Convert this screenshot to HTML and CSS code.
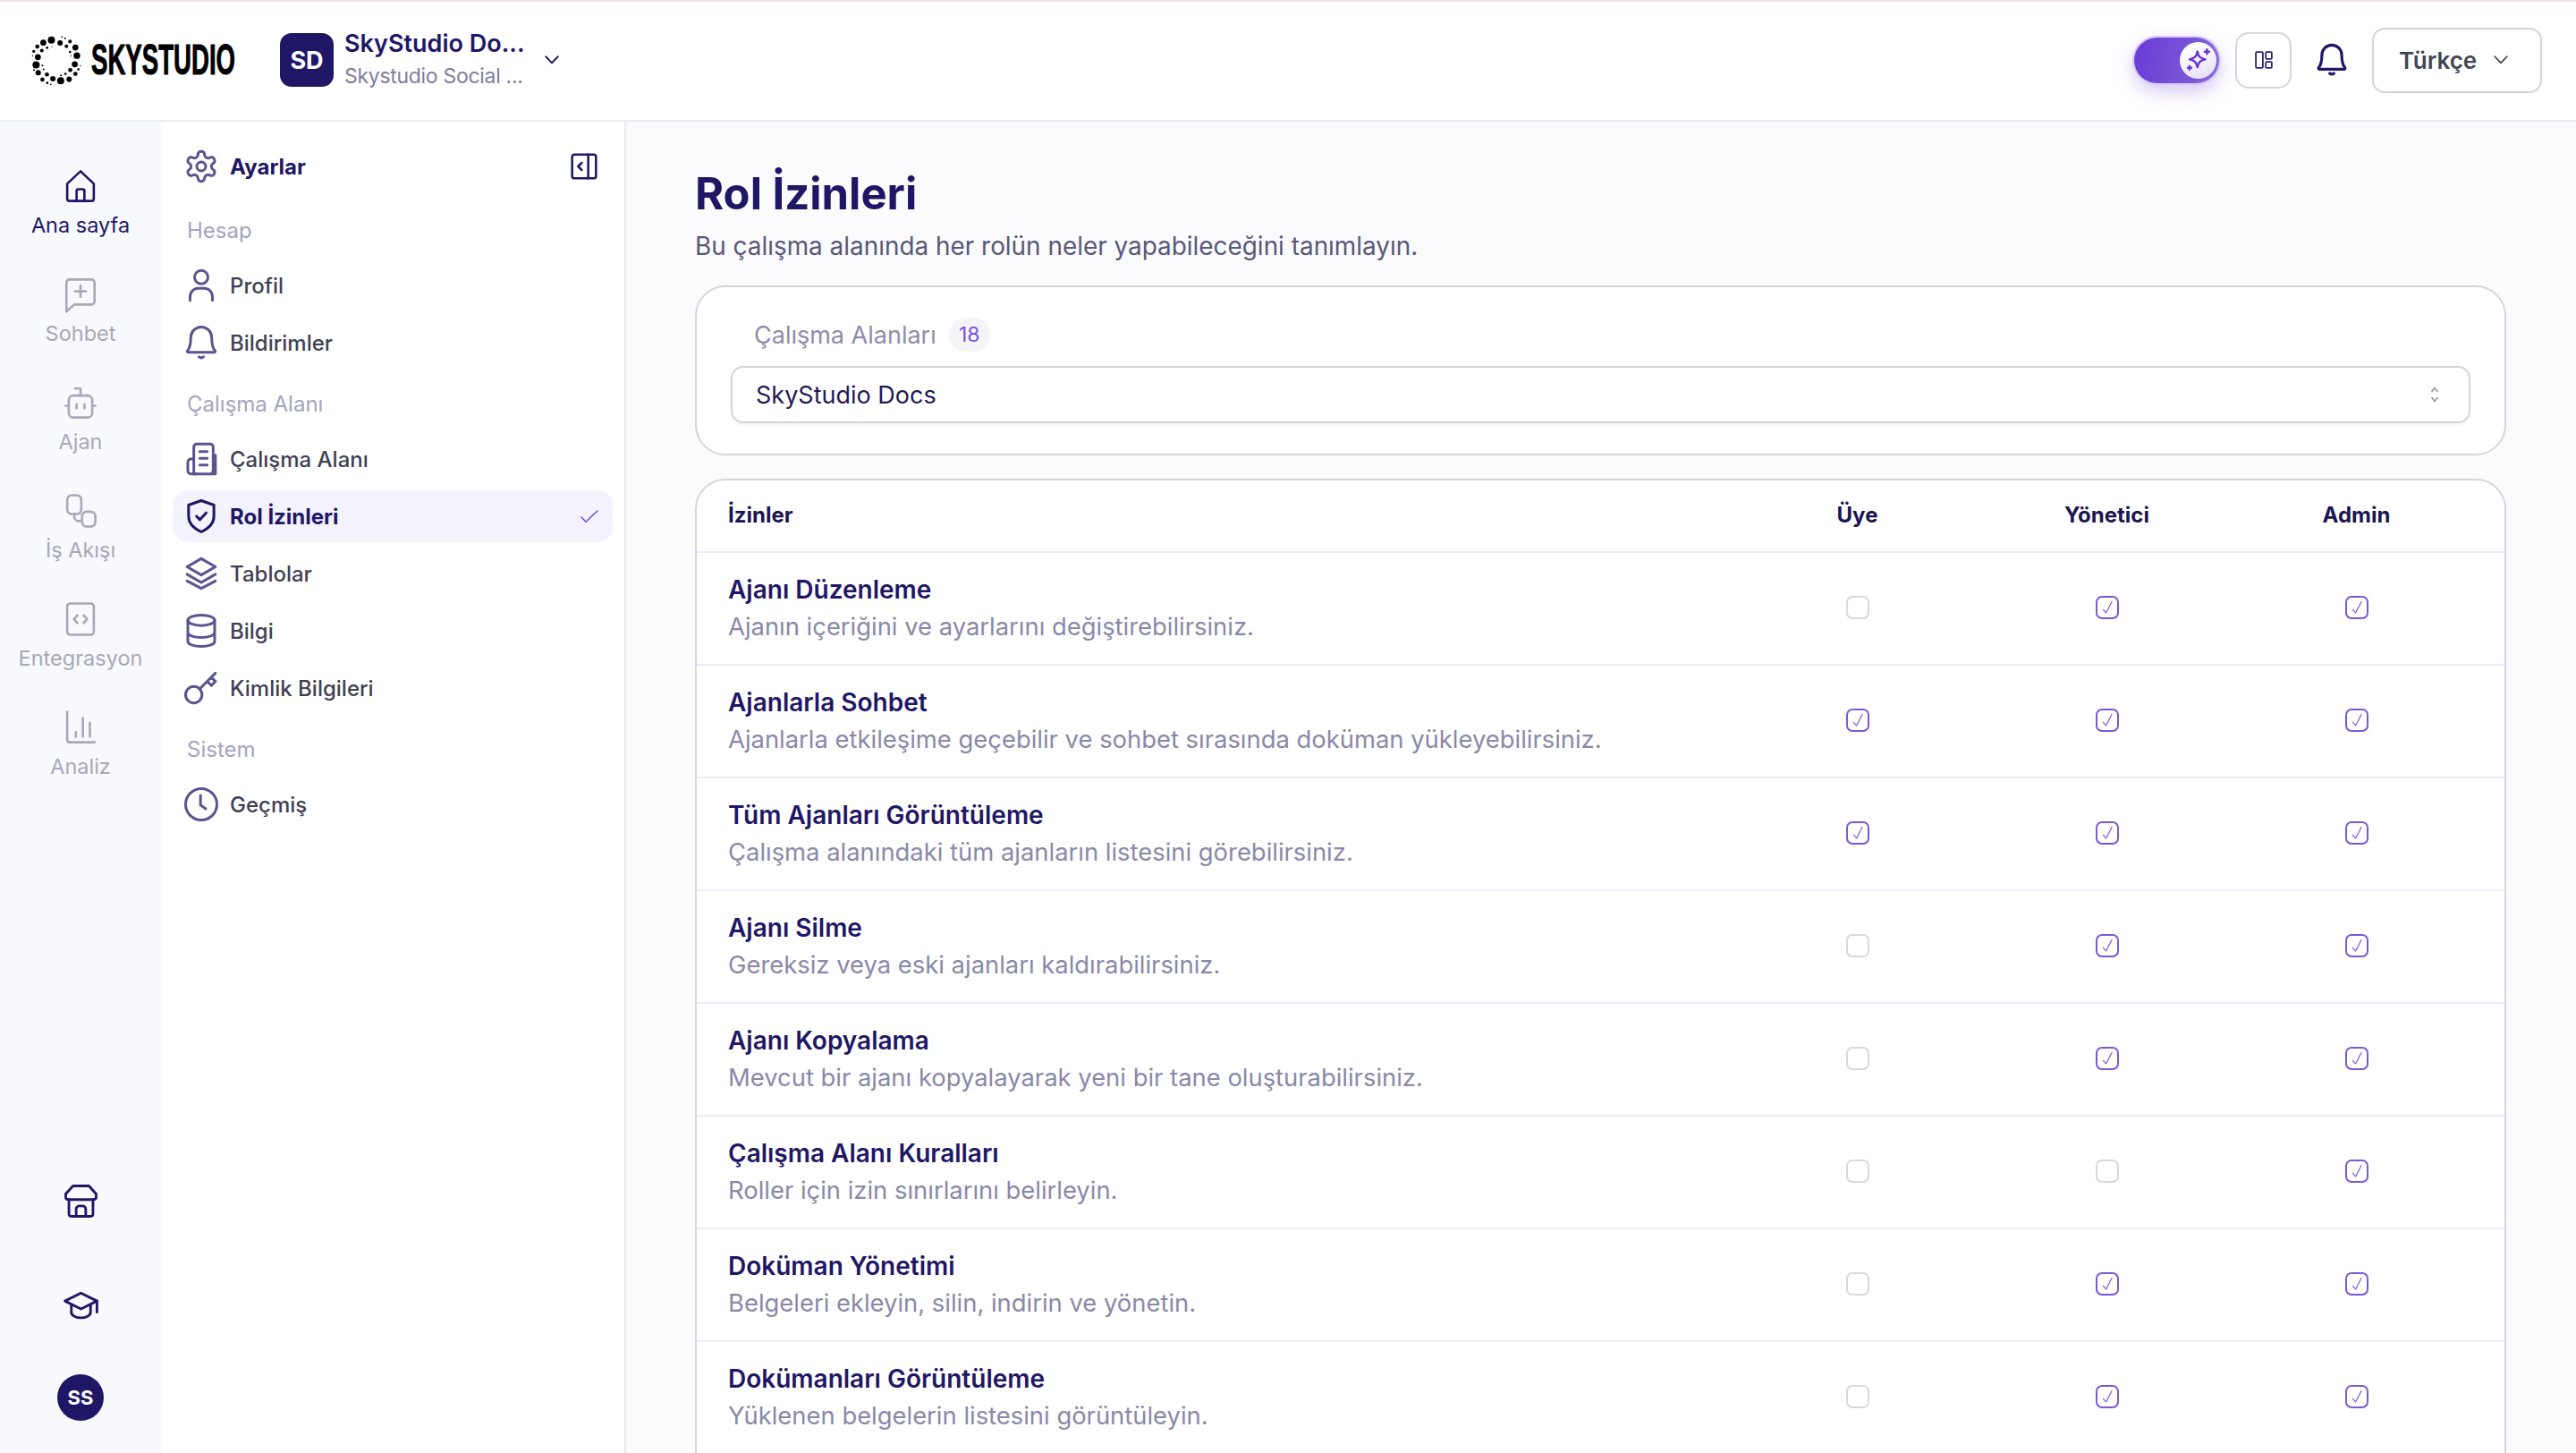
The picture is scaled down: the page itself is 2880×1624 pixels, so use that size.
FILE: index.html
```html
<!DOCTYPE html>
<html lang="tr">
<head>
<meta charset="utf-8">
<title>Rol İzinleri</title>
<link rel="stylesheet" href="styles.css">
</head>
<body>
<svg class="defs" width="0" height="0" aria-hidden="true">
  <symbol id="i-home" viewBox="0 0 24 24"><path d="M3.5 10.5 12 2.5l8.500 8V20a1.500 1.500 0 0 1-1.500 1.500H5A1.500 1.500 0 0 1 3.500 20z"/><path d="M9.500 21.500V15a1 1 0 0 1 1-1h3a1 1 0 0 1 1 1v6.500"/></symbol>
  <symbol id="i-chat" viewBox="0 0 24 24"><path d="M5 2.500h14a2 2 0 0 1 2 2v12a2 2 0 0 1-2 2H8l-5 4.500v-18.500a2 2 0 0 1 2-2z"/><path d="M12 6.500v7M8.500 10h7"/></symbol>
  <symbol id="i-bot" viewBox="0 0 24 24"><rect x="4.500" y="7.500" width="15" height="14" rx="3"/><path d="M12 7.500V3H8.500M9.500 13v2.500M14.500 13v2.500M2.500 14h2M19.500 14h2"/></symbol>
  <symbol id="i-flow" viewBox="0 0 24 24"><rect x="3.500" y="2" width="9" height="12" rx="3"/><rect x="13" y="12.500" width="8.500" height="9.500" rx="3"/><path d="M8 14v1.500a3 3 0 0 0 3 3h2"/></symbol>
  <symbol id="i-code" viewBox="0 0 24 24"><rect x="3.500" y="2" width="17" height="20" rx="2"/><path d="M10 9.500 7.800 12l2.200 2.500M14 9.500l2.200 2.500-2.200 2.500"/></symbol>
  <symbol id="i-chart" viewBox="0 0 24 24"><path d="M3.500 2v18a1.500 1.500 0 0 0 1.500 1.500h16M9 15v3M13.500 6v12M18 9v9"/></symbol>
  <symbol id="i-store" viewBox="0 0 24 24"><path d="M7 2.500h10l4.500 5v2a1.500 1.500 0 0 1-1.500 1.500H4a1.500 1.500 0 0 1-1.500-1.500v-2z"/><path d="M4.500 11v9a1.500 1.500 0 0 0 1.500 1.500h12a1.500 1.500 0 0 0 1.500-1.500v-9"/><path d="M9 21.500V17a2 2 0 0 1 2-2h2a2 2 0 0 1 2 2v4.500"/></symbol>
  <symbol id="i-cap" viewBox="0 0 24 24"><path d="M12 4 2 9l10 5 10-5z"/><path d="M6 11.500V16c0 2 3 3.500 6 3.500s6-1.500 6-3.500v-4.500M22 9v7"/></symbol>
  <symbol id="i-gear" viewBox="0 0 24 24"><path d="M12.220 2h-.44a2 2 0 0 0-2 2v.18a2 2 0 0 1-1 1.730l-.43.250a2 2 0 0 1-2 0l-.15-.08a2 2 0 0 0-2.730.730l-.22.380a2 2 0 0 0 .730 2.730l.15.1a2 2 0 0 1 1 1.720v.510a2 2 0 0 1-1 1.740l-.15.090a2 2 0 0 0-.730 2.730l.22.380a2 2 0 0 0 2.730.730l.15-.08a2 2 0 0 1 2 0l.43.250a2 2 0 0 1 1 1.730V20a2 2 0 0 0 2 2h.44a2 2 0 0 0 2-2v-.18a2 2 0 0 1 1-1.730l.43-.25a2 2 0 0 1 2 0l.15.08a2 2 0 0 0 2.730-.730l.22-.390a2 2 0 0 0-.730-2.730l-.15-.08a2 2 0 0 1-1-1.740v-.5a2 2 0 0 1 1-1.740l.15-.09a2 2 0 0 0 .730-2.730l-.22-.38a2 2 0 0 0-2.730-.730l-.15.08a2 2 0 0 1-2 0l-.43-.25a2 2 0 0 1-1-1.730V4a2 2 0 0 0-2-2z"/><circle cx="12" cy="12" r="3"/></symbol>
  <symbol id="i-collapse" viewBox="0 0 24 24"><rect x="2" y="2" width="20" height="20" rx="2"/><path d="M15.500 2v20M10 9l-3 3 3 3"/></symbol>
  <symbol id="i-user" viewBox="0 0 24 24"><circle cx="12" cy="6.500" r="4.500"/><path d="M4.500 22v-2.500a5.500 5.500 0 0 1 5.500-5.500h4a5.500 5.500 0 0 1 5.500 5.500V22"/></symbol>
  <symbol id="i-bell" viewBox="0 0 24 24"><path d="M12 1.500a7 7 0 0 0-7 7c0 4.500-.6 7-2.300 9-.3.400 0 1 .4 1h17.800c.4 0 .7-.6.4-1-1.700-2-2.300-4.500-2.300-9a7 7 0 0 0-7-7z"/><path d="M10.500 21.500q1.500 1.200 3 0"/></symbol>
  <symbol id="i-building" viewBox="0 0 24 24"><path d="M7 22V4a2 2 0 0 1 2-2h9a2 2 0 0 1 2 2v16a2 2 0 0 1-2 2H5a2 2 0 0 1-2-2v-6a2 2 0 0 1 2-2h2M20 9.500h1.500V22H18"/><path d="M11 7h5M11 11.500h5M11 16h5M7 22h2"/></symbol>
  <symbol id="i-shield" viewBox="0 0 24 24"><path d="M12 1.500 20.500 4.500v7.500c0 5-3.800 8.300-8.500 10.500C7.300 20.300 3.500 17 3.500 12V4.500z"/><path d="m8.800 12 2.300 2.300 4.200-4.600"/></symbol>
  <symbol id="i-layers" viewBox="0 0 24 24"><path d="M12 2 2.500 7.500 12 13l9.500-5.500z"/><path d="m2.500 12.500 9.500 5.500 9.500-5.500M2.500 17l9.500 5 9.500-5"/></symbol>
  <symbol id="i-db" viewBox="0 0 24 24"><ellipse cx="12" cy="5" rx="9" ry="3.500"/><path d="M3 5v14c0 2 4 3.500 9 3.500s9-1.500 9-3.500V5M3 13c0 2 4 3.500 9 3.500s9-1.500 9-3.500"/></symbol>
  <symbol id="i-key" viewBox="0 0 24 24"><circle cx="7" cy="16.500" r="5.500"/><path d="M11 12.500 21.500 2M16 7.500l2.800 2.800 2.700-2.700-2.800-2.800"/></symbol>
  <symbol id="i-clock" viewBox="0 0 24 24"><circle cx="12" cy="12" r="10.500"/><path d="M11.500 6v6.500l3.500 2.500"/></symbol>
  <symbol id="i-chev" viewBox="0 0 24 24"><path d="m3 7 9 9.500L21 7"/></symbol>
  <symbol id="i-check" viewBox="0 0 24 24"><path d="m7 14.500 3.500 4L17.500 5"/></symbol>
  <symbol id="i-tick" viewBox="0 0 20 14"><path d="m1 8 5 5.200L19 1"/></symbol>
  <symbol id="i-sparkle" viewBox="0 0 24 24"><path d="M11 4.500c.8 4.500 2.500 6.200 7 7-4.500.8-6.200 2.500-7 7-.8-4.500-2.500-6.200-7-7 4.500-.8 6.200-2.500 7-7z"/><path d="M19.500 2.500v4M17.500 4.500h4M4 17.500v3M2.500 19h3"/></symbol>
</svg>

<div class="app">
  <header class="topbar">
    <div class="brand">
      <svg class="brand-ring" viewBox="40 55 170 170" aria-hidden="true">
        <g fill="#000">
          <circle cx="110" cy="72" r="12"/><circle cx="83" cy="81" r="10"/><circle cx="63" cy="94" r="7"/><circle cx="139" cy="82" r="9"/><circle cx="172" cy="77" r="6"/><circle cx="190" cy="97" r="10"/><circle cx="160" cy="93" r="6"/><circle cx="195" cy="124" r="11"/><circle cx="65" cy="129" r="10"/><circle cx="51" cy="110" r="5"/><circle cx="78" cy="107" r="6"/><circle cx="96" cy="98" r="4"/><circle cx="112" cy="94" r="2"/><circle cx="145" cy="62" r="2.500"/><circle cx="156" cy="67" r="3"/><circle cx="172" cy="112" r="4"/><circle cx="175" cy="125" r="2"/><circle cx="47" cy="125" r="2"/><circle cx="59" cy="155" r="12"/><circle cx="188" cy="153" r="10"/><circle cx="207" cy="158" r="2"/><circle cx="200" cy="170" r="4"/><circle cx="173" cy="172" r="7"/><circle cx="190" cy="185" r="7"/><circle cx="66" cy="181" r="9"/><circle cx="52" cy="172" r="3"/><circle cx="80" cy="157" r="3"/><circle cx="84" cy="170" r="3"/><circle cx="95" cy="187" r="7"/><circle cx="80" cy="204" r="7"/><circle cx="96" cy="215" r="4"/><circle cx="108" cy="220" r="2.500"/><circle cx="115" cy="201" r="9"/><circle cx="141" cy="208" r="12"/><circle cx="169" cy="203" r="9"/><circle cx="157" cy="185" r="4"/><circle cx="142" cy="190" r="3"/>
        </g>
      </svg>
      <span class="brand-box"><span class="brand-name">SKYSTUDIO</span></span>
    </div>
    <div class="workspace">
      <span class="ws-badge">SD</span>
      <span class="ws-text">
        <span class="ws-name">SkyStudio Do...</span>
        <span class="ws-sub">Skystudio Social ...</span>
      </span>
      <svg class="ic ws-chev"><use href="#i-chev"/></svg>
    </div>
    <div class="top-actions">
      <span class="toggle"><span class="knob"><svg class="ic knob-star"><use href="#i-sparkle"/></svg></span></span>
      <span class="grid-btn">
        <svg class="grid-ic" viewBox="0 0 18 18"><rect x="1" y="1" width="7" height="16" rx="1"/><rect x="11" y="1" width="6" height="7" rx="1"/><rect x="11" y="11" width="6" height="6" rx="1"/></svg>
      </span>
      <svg class="ic top-bell"><use href="#i-bell"/></svg>
      <span class="lang">Türkçe <svg class="ic lang-chev"><use href="#i-chev"/></svg></span>
    </div>
  </header>

  <div class="body">
    <nav class="rail">
      <a class="rail-item active"><svg class="ic rail-ic"><use href="#i-home"/></svg><span>Ana sayfa</span></a>
      <a class="rail-item"><svg class="ic rail-ic"><use href="#i-chat"/></svg><span>Sohbet</span></a>
      <a class="rail-item"><svg class="ic rail-ic"><use href="#i-bot"/></svg><span>Ajan</span></a>
      <a class="rail-item"><svg class="ic rail-ic"><use href="#i-flow"/></svg><span>İş Akışı</span></a>
      <a class="rail-item"><svg class="ic rail-ic"><use href="#i-code"/></svg><span>Entegrasyon</span></a>
      <a class="rail-item"><svg class="ic rail-ic"><use href="#i-chart"/></svg><span>Analiz</span></a>
      <div class="rail-foot">
        <svg class="ic foot-ic"><use href="#i-store"/></svg>
        <svg class="ic foot-ic foot-cap"><use href="#i-cap"/></svg>
        <span class="avatar">SS</span>
      </div>
    </nav>

    <aside class="sidebar">
      <div class="side-head">
        <svg class="ic side-ic head-ic"><use href="#i-gear"/></svg>
        <span class="side-title">Ayarlar</span>
        <svg class="ic collapse"><use href="#i-collapse"/></svg>
      </div>
      <div class="side-label">Hesap</div>
      <ul class="side-list">
        <li class="side-item"><svg class="ic side-ic"><use href="#i-user"/></svg>Profil</li>
        <li class="side-item"><svg class="ic side-ic"><use href="#i-bell"/></svg>Bildirimler</li>
      </ul>
      <div class="side-label">Çalışma Alanı</div>
      <ul class="side-list">
        <li class="side-item"><svg class="ic side-ic"><use href="#i-building"/></svg>Çalışma Alanı</li>
        <li class="side-item current"><svg class="ic side-ic"><use href="#i-shield"/></svg>Rol İzinleri<svg class="ic cur-check"><use href="#i-tick"/></svg></li>
        <li class="side-item"><svg class="ic side-ic"><use href="#i-layers"/></svg>Tablolar</li>
        <li class="side-item"><svg class="ic side-ic"><use href="#i-db"/></svg>Bilgi</li>
        <li class="side-item"><svg class="ic side-ic"><use href="#i-key"/></svg>Kimlik Bilgileri</li>
      </ul>
      <div class="side-label">Sistem</div>
      <ul class="side-list">
        <li class="side-item"><svg class="ic side-ic"><use href="#i-clock"/></svg>Geçmiş</li>
      </ul>
    </aside>

    <main class="main">
      <h1 class="page-title">Rol İzinleri</h1>
      <p class="page-sub">Bu çalışma alanında her rolün neler yapabileceğini tanımlayın.</p>

      <section class="card picker">
        <div class="picker-label"><span>Çalışma Alanları</span><span class="count">18</span></div>
        <div class="select">
          <span>SkyStudio Docs</span>
          <svg class="updown" viewBox="0 0 12 20"><path d="m2.500 7 3.500-4.500L9.500 7M2.500 13 6 17.500 9.500 13"/></svg>
        </div>
      </section>

      <section class="card perms">
        <div class="row head"><span class="h-name">İzinler</span><span class="col">Üye</span><span class="col">Yönetici</span><span class="col">Admin</span></div>

        <div class="row"><div><div class="p-title">Ajanı Düzenleme</div><div class="p-desc">Ajanın içeriğini ve ayarlarını değiştirebilirsiniz.</div></div>
          <span class="col"><span class="cb"></span></span><span class="col"><span class="cb on"><svg class="ic cb-check"><use href="#i-check"/></svg></span></span><span class="col"><span class="cb on"><svg class="ic cb-check"><use href="#i-check"/></svg></span></span></div>

        <div class="row"><div><div class="p-title">Ajanlarla Sohbet</div><div class="p-desc">Ajanlarla etkileşime geçebilir ve sohbet sırasında doküman yükleyebilirsiniz.</div></div>
          <span class="col"><span class="cb on"><svg class="ic cb-check"><use href="#i-check"/></svg></span></span><span class="col"><span class="cb on"><svg class="ic cb-check"><use href="#i-check"/></svg></span></span><span class="col"><span class="cb on"><svg class="ic cb-check"><use href="#i-check"/></svg></span></span></div>

        <div class="row"><div><div class="p-title">Tüm Ajanları Görüntüleme</div><div class="p-desc">Çalışma alanındaki tüm ajanların listesini görebilirsiniz.</div></div>
          <span class="col"><span class="cb on"><svg class="ic cb-check"><use href="#i-check"/></svg></span></span><span class="col"><span class="cb on"><svg class="ic cb-check"><use href="#i-check"/></svg></span></span><span class="col"><span class="cb on"><svg class="ic cb-check"><use href="#i-check"/></svg></span></span></div>

        <div class="row"><div><div class="p-title">Ajanı Silme</div><div class="p-desc">Gereksiz veya eski ajanları kaldırabilirsiniz.</div></div>
          <span class="col"><span class="cb"></span></span><span class="col"><span class="cb on"><svg class="ic cb-check"><use href="#i-check"/></svg></span></span><span class="col"><span class="cb on"><svg class="ic cb-check"><use href="#i-check"/></svg></span></span></div>

        <div class="row"><div><div class="p-title">Ajanı Kopyalama</div><div class="p-desc">Mevcut bir ajanı kopyalayarak yeni bir tane oluşturabilirsiniz.</div></div>
          <span class="col"><span class="cb"></span></span><span class="col"><span class="cb on"><svg class="ic cb-check"><use href="#i-check"/></svg></span></span><span class="col"><span class="cb on"><svg class="ic cb-check"><use href="#i-check"/></svg></span></span></div>

        <div class="row"><div><div class="p-title">Çalışma Alanı Kuralları</div><div class="p-desc">Roller için izin sınırlarını belirleyin.</div></div>
          <span class="col"><span class="cb"></span></span><span class="col"><span class="cb"></span></span><span class="col"><span class="cb on"><svg class="ic cb-check"><use href="#i-check"/></svg></span></span></div>

        <div class="row"><div><div class="p-title">Doküman Yönetimi</div><div class="p-desc">Belgeleri ekleyin, silin, indirin ve yönetin.</div></div>
          <span class="col"><span class="cb"></span></span><span class="col"><span class="cb on"><svg class="ic cb-check"><use href="#i-check"/></svg></span></span><span class="col"><span class="cb on"><svg class="ic cb-check"><use href="#i-check"/></svg></span></span></div>

        <div class="row"><div><div class="p-title">Dokümanları Görüntüleme</div><div class="p-desc">Yüklenen belgelerin listesini görüntüleyin.</div></div>
          <span class="col"><span class="cb"></span></span><span class="col"><span class="cb on"><svg class="ic cb-check"><use href="#i-check"/></svg></span></span><span class="col"><span class="cb on"><svg class="ic cb-check"><use href="#i-check"/></svg></span></span></div>
      </section>
    </main>
  </div>
</div>
</body>
</html>
```

FILE: styles.css
```css
* { box-sizing: border-box; }
html, body { margin: 0; height: 100%; overflow: hidden; }
body { font-family: Inter, "Noto Sans", sans-serif; color: #1f1766; background: #fff; }
.defs { position: absolute; }
.ic { fill: none; stroke: currentColor; stroke-width: 1.7; stroke-linecap: round; stroke-linejoin: round; flex: none; }

.app { height: 100vh; display: flex; flex-direction: column; }

/* top bar */
.topbar { height: 136px; flex: none; display: flex; align-items: center; padding: 0 38px 2px 34px; border-top: 2px solid #f3e1e7; border-bottom: 2px solid #ecebf3; background: #fff; }
.brand { display: flex; align-items: center; gap: 11px; }
.brand-ring { width: 57px; height: 57px; }
.brand-box { display: block; width: 161px; height: 48px; overflow: visible; }
.brand-name { display: block; font-family: "Liberation Sans", sans-serif; font-weight: 700; font-size: 48px; line-height: 48px; color: #000; transform: scaleX(.575); transform-origin: left center; white-space: nowrap; -webkit-text-stroke: 1px #000; }
.workspace { display: flex; align-items: center; margin-left: 50px; }
.ws-badge { width: 60px; height: 60px; border-radius: 13px; background: #1f1766; color: #fff; font-weight: 700; font-size: 27px; display: flex; align-items: center; justify-content: center; }
.ws-text { display: flex; flex-direction: column; margin-left: 12px; width: 223px; }
.ws-name { font-size: 27px; font-weight: 600; line-height: 36px; }
.ws-sub { font-size: 23px; letter-spacing: -.3px; line-height: 36px; color: #7f7d9c; }
.ws-chev { width: 18px; height: 18px; color: #1f1766; stroke-width: 2.6; }
.top-actions { margin-left: auto; display: flex; align-items: center; }
.toggle { width: 95px; height: 51px; border-radius: 26px; display: flex; align-items: center; justify-content: flex-end; padding-right: 3px; background: linear-gradient(100deg, #6a3bd6 0%, #7a58d8 70%, #8a6ddc 100%); box-shadow: 0 0 0 2px #d9ccf6, 0 8px 22px rgba(122, 80, 224, .35); }
.knob { width: 41px; height: 41px; border-radius: 50%; background: linear-gradient(160deg, #fff 20%, #e6dcf8 100%); display: flex; align-items: center; justify-content: center; }
.knob-star { width: 30px; height: 30px; color: #6a35d8; stroke-width: 2; }
.grid-btn { width: 63px; height: 63px; margin-left: 18px; border: 2px solid #d5d6dc; border-radius: 15px; display: flex; align-items: center; justify-content: center; background: #fff; }
.grid-ic { width: 20px; height: 20px; fill: none; stroke: #2a2176; stroke-width: 1.6; }
.top-bell { width: 38px; height: 38px; margin-left: 26px; color: #1f1766; stroke-width: 2; }
.lang { width: 190px; height: 73px; margin-left: 26px; border: 2px solid #d1d5db; border-radius: 14px; display: flex; align-items: center; gap: 18px; padding-left: 28px; font-size: 26px; font-weight: 600; color: #414652; }
.lang-chev { width: 18px; height: 18px; stroke-width: 2.4; }

.body { flex: 1; min-height: 0; display: flex; }

/* icon rail */
.rail { width: 180px; flex: none; background: #f8f9fd; display: flex; flex-direction: column; align-items: center; gap: 44px; padding: 55px 0 36px; }
.rail-item { display: flex; flex-direction: column; align-items: center; gap: 11px; color: #a8a8b6; font-size: 23.5px; line-height: 32px; white-space: nowrap; }
.rail-item.active { color: #1f1766; }
.rail-ic { width: 42px; height: 42px; margin: -4px; stroke-width: 1.5; }
.rail-foot { margin-top: auto; display: flex; flex-direction: column; align-items: center; }
.foot-ic { width: 43px; height: 43px; margin: -4px; color: #1f1766; stroke-width: 1.6; }
.foot-cap { margin-top: 78px; }
.avatar { width: 52px; height: 52px; margin-top: 59px; border-radius: 50%; background: #1f1766; color: #fff; font-size: 22px; font-weight: 700; display: flex; align-items: center; justify-content: center; }

/* settings sidebar */
.sidebar { width: 520px; flex: none; background: #fff; border-right: 2px solid #ecebf3; padding: 22px 13px 0; }
.side-head { height: 58px; display: flex; align-items: center; padding: 0 16px 2px; font-size: 24px; font-weight: 700; }
.side-title { margin-left: 16px; flex: 1; }
.head-ic { color: #1f1766; }
.collapse { width: 32px; height: 32px; color: #1f1766; stroke-width: 1.9; }
.side-ic { width: 40px; height: 40px; margin: -4px; color: #5a5490; stroke-width: 1.8; }
.side-label { margin: 24px 0 16px; padding-left: 16px; font-size: 24px; line-height: 32px; color: #a6a4c0; }
.side-head + .side-label { margin-top: 26px; }
.side-list { list-style: none; margin: 0; padding: 0; display: flex; flex-direction: column; gap: 6px; }
.side-item { height: 58px; display: flex; align-items: center; gap: 16px; padding: 0 16px; border-radius: 18px; font-size: 24px; font-weight: 500; color: #3f4152; }
.side-item.current { background: #f3f2fd; color: #1f1766; font-weight: 700; }
.side-item.current .side-ic { color: #1f1766; }
.cur-check { width: 20px; height: 14px; margin-left: auto; color: #6a45d8; stroke-width: 1.4; }

/* main */
.main { flex: 1; min-width: 0; background: #fbfbfd; padding: 51px 78px 0 77px; overflow: hidden; }
.page-title { margin: 0; font-size: 49px; line-height: 60px; font-weight: 700; color: #1f1766; }
.page-sub { margin: 8px 0 0; font-size: 27.9px; line-height: 40px; color: #5a5878; }
.card { background: #fff; border: 2px solid #d5d6dc; border-radius: 34px; }
.picker { margin-top: 24px; padding: 34px 38px; }
.picker-label { display: flex; align-items: center; gap: 14px; height: 38px; padding-left: 26px; font-size: 27px; color: #8e8ca8; margin-bottom: 16px; }
.count { width: 46px; height: 38px; border-radius: 19px; background: #f5f5f7; color: #7a4fe0; font-size: 23px; display: flex; align-items: center; justify-content: center; }
.select { height: 64px; display: flex; align-items: center; justify-content: space-between; padding: 0 32px 0 26px; border: 2px solid #d5d6dc; border-radius: 14px; box-shadow: 0 2px 3px rgba(30, 30, 60, .06); font-size: 27px; color: #1f1a55; }
.updown { width: 12px; height: 20px; fill: none; stroke: #8e8ca8; stroke-width: 1.4; }
.perms { margin-top: 26px; border-bottom-left-radius: 0; border-bottom-right-radius: 0; }
.row { height: 126px; display: grid; grid-template-columns: 1fr 279px 279px 279px; align-items: center; padding: 0 26px 2px 35px; border-bottom: 2px solid #ecebfb; }
.row.head { height: 81px; font-size: 24px; font-weight: 700; color: #1a1550; }
.col { display: flex; justify-content: center; align-items: center; }
.p-title { font-size: 28px; line-height: 40px; font-weight: 600; color: #1f1766; }
.p-desc { margin-top: 1px; font-size: 27.4px; line-height: 40px; color: #8a88a8; }
.cb { width: 26px; height: 26px; border: 2px solid #d8d9de; border-radius: 7px; background: #fff; display: flex; align-items: center; justify-content: center; }
.cb.on { border-color: #7a58d8; }
.cb-check { width: 22px; height: 22px; color: #7a58d8; stroke-width: 1.3; }
```
